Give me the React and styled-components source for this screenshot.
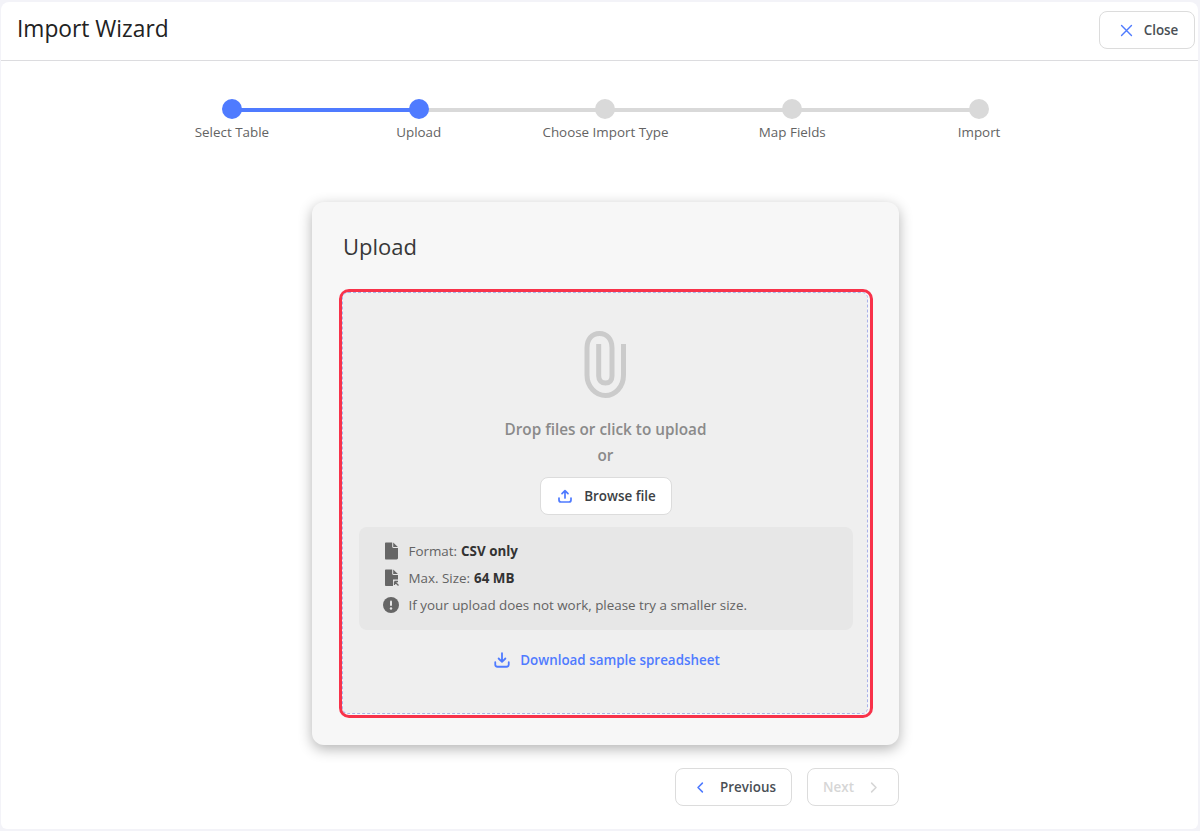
import React from "react";
import styled, { createGlobalStyle } from "styled-components";

const FONT = `"Open Sans", "Noto Sans", "Liberation Sans", sans-serif`;

const Global = createGlobalStyle`
  html, body { margin: 0; padding: 0; background: #f3f3f8; }
  body { font-family: ${FONT}; }
  * { box-sizing: border-box; }
`;

const Window = styled.div`
  width: 1197px; height: 827px; margin: 2px 0 0 1px;
  background: #fff; border-radius: 8px 8px 6px 6px;
  display: flex; flex-direction: column; overflow: hidden;
`;
const Header = styled.header`
  height: 59px; flex: none; padding: 0 3px 2px 16px;
  border-bottom: 1px solid #dcdcdf;
  display: flex; align-items: center; justify-content: space-between;
`;
const Title = styled.h1`
  margin: 0 0 2px; font-size: 22.75px; font-weight: 500; color: #222; line-height: 30px;
`;
const Button = styled.button`
  height: 38px; width: ${p => p.$w}px; padding: 0 ${p => p.$pr || 0}px 0 ${p => p.$pl || 0}px; background: #fff;
  border: 1px solid #dcdcdc; border-radius: 8px;
  font: 600 13.4px ${FONT};
  color: ${p => (p.disabled ? "#d6d6d6" : "#4a4f55")};
  display: inline-flex; align-items: center; justify-content: center; gap: ${p => p.$gap || 12}px;
`;
const Main = styled.main`
  flex: 1; display: flex; flex-direction: column; align-items: center;
  padding: 38px 0 0 11px;
`;
const Stepper = styled.ol`
  list-style: none; margin: 0 0 0 1px; padding: 0; width: 934px;
  display: grid; grid-template-columns: repeat(5, 1fr);
`;
const Step = styled.li`
  position: relative; display: flex; flex-direction: column; align-items: center;
  &::before {
    content: ""; position: absolute; top: 9px; left: -50%; width: 100%; height: 4px;
    background: ${p => (p.$done ? "#4f7bff" : "#d9d9d9")};
    display: ${p => (p.$first ? "none" : "block")};
  }
`;
const Dot = styled.span`
  position: relative; z-index: 1; width: 20px; height: 20px; border-radius: 50%;
  background: ${p => (p.$done ? "#4f7bff" : "#d9d9d9")};
`;
const StepLabel = styled.span`
  margin-top: 3px; font-size: 13.4px; line-height: 20px; color: #636363; white-space: nowrap;
`;
const Card = styled.section`
  margin: 60px 0 0 1px; width: 587px; height: 543px; flex: none;
  background: #f7f7f7; border-radius: 12px; padding: 28px 26px 28px 27px;
  box-shadow: 0 4px 14px rgba(0,0,0,.3);
`;
const CardTitle = styled.h2`
  margin: 0 0 25px 4px; font-size: 22px; font-weight: 400; color: #383838; line-height: 32px;
  padding-bottom: 2px;
`;
const Highlight = styled.div`
  height: 429px; border: 3px solid #f8324a; border-radius: 10px;
`;
const Drop = styled.div`
  width: calc(100% - 2px); height: calc(100% - 1px);
  background: #efefef; background-clip: padding-box;
  border: 1px dashed #aab2ea; border-radius: 6px;
  padding: 38px 15px 0 16px; display: flex; flex-direction: column; align-items: center;
`;
const Clip = styled.svg`
  width: 44px; height: 67px; display: block; flex: none; margin-left: 1px;
`;
const DropText = styled.div`
  margin-top: 18px; font-size: 15.3px; font-weight: 600; line-height: 26px; color: #8a8a8a;
  text-align: center;
`;
const Browse = styled(Button)`
  margin-top: 9px; color: #3c3f44; flex: none;
`;
const Info = styled.ul`
  list-style: none; margin: 12px 0 0; padding: 14px 24px 0; width: 494px; height: 103px;
  background: #e7e7e7; border-radius: 8px; flex: none;
  display: flex; flex-direction: column; gap: 7px;
`;
const InfoRow = styled.li`
  display: flex; align-items: center; gap: 10px; height: 20px;
  font-size: 13.4px; color: #636363; white-space: nowrap;
  b { font-weight: 700; color: #333; margin-left: 4px; }
`;
const InfoIcon = styled.svg`
  width: 16px; height: 18px; flex: none; display: block;
`;
const DownloadLink = styled.a`
  margin: 19px 0 0 2px; display: flex; align-items: center; gap: 9px;
  font-size: 13.4px; font-weight: 600; line-height: 22px; color: #4f7bff; text-decoration: none;
`;
const Footer = styled.nav`
  width: 587px; margin: 23px 0 0 1px; display: flex; justify-content: flex-end; gap: 15px;
`;

const Stroke = ({ children, size = 16, color = "#4f7bff", w = 2 }) => (
  <svg width={size} height={size} viewBox="0 0 24 24" fill="none" stroke={color} strokeWidth={w} strokeLinecap="round" strokeLinejoin="round">
    {children}
  </svg>
);

const steps = ["Select Table", "Upload", "Choose Import Type", "Map Fields", "Import"];

export default function App() {
  return (
    <>
      <Global />
      <Window>
        <Header>
          <Title>Import Wizard</Title>
          <Button $w={96} $gap={9} $pl={2}>
            <Stroke size={17}><path d="M5 5l14 14M19 5L5 19" /></Stroke>
            Close
          </Button>
        </Header>
        <Main>
          <Stepper>
            {steps.map((s, i) => (
              <Step key={s} $first={i === 0} $done={i < 2}>
                <Dot $done={i < 2} />
                <StepLabel>{s}</StepLabel>
              </Step>
            ))}
          </Stepper>
          <Card>
            <CardTitle>Upload</CardTitle>
            <Highlight>
              <Drop>
                <Clip viewBox="0 0 44 67" fill="none" stroke="#cbcbcb" strokeWidth="5">
                  <path d="M39.500 13V44C39.500 56 31 64.500 21.500 64.500C12 64.500 3 56 3 44V17C3 8 8 2.500 15.500 2.500C23 2.500 28 8 28 17V45C28 49.500 25.500 52 21.500 52C17.500 52 14.700 49.500 14.700 45V13" />
                </Clip>
                <DropText>Drop files or click to upload<br />or</DropText>
                <Browse $w={132} $gap={11} $pl={2}>
                  <Stroke size={16} w={2.600}><path d="M12 15V4M7.500 8.500L12 4l4.500 4.500M3 15v3a3 3 0 0 0 3 3h12a3 3 0 0 0 3-3v-3" /></Stroke>
                  Browse file
                </Browse>
                <Info>
                  <InfoRow>
                    <InfoIcon viewBox="0 0 16 18" fill="#666"><path d="M2 1.500C2 .9 2.500 .5 3 .5h6.200v4.300c0 .7.5 1.200 1.200 1.200H15v10c0 .6-.5 1.500-1.500 1.500H3c-.6 0-1-.5-1-1.500zM10.200 .6l4.700 4.500h-4.700z" /></InfoIcon>
                    <span>Format:<b>CSV only</b></span>
                  </InfoRow>
                  <InfoRow>
                    <InfoIcon viewBox="0 0 16 18" fill="#666"><path d="M2 1.500C2 .9 2.500 .5 3 .5h6.200v4.300c0 .7.5 1.200 1.200 1.200H15v4.500H10v6.500H3c-.6 0-1-.5-1-1.500zM10.200 .6l4.700 4.500h-4.700z" /><path d="M11.500 12.500h3.500M11.500 12.500V16M11.500 12.500l4 4" stroke="#666" strokeWidth="1.300" fill="none" /></InfoIcon>
                    <span>Max. Size:<b>64 MB</b></span>
                  </InfoRow>
                  <InfoRow>
                    <InfoIcon viewBox="0 0 16 18"><circle cx="8" cy="9" r="8" fill="#666" /><rect x="7" y="4.500" width="2" height="5.500" rx="1" fill="#e7e7e7" /><circle cx="8" cy="12.500" r="1.200" fill="#e7e7e7" /></InfoIcon>
                    <span>If your upload does not work, please try a smaller size.</span>
                  </InfoRow>
                </Info>
                <DownloadLink href="#">
                  <Stroke size={18} w={2.400}><path d="M12 3v11M7.500 10L12 14.500 16.500 10M3 15v3a3 3 0 0 0 3 3h12a3 3 0 0 0 3-3v-3" /></Stroke>
                  Download sample spreadsheet
                </DownloadLink>
              </Drop>
            </Highlight>
          </Card>
          <Footer>
            <Button $w={117} $pl={2}>
              <Stroke size={15} w={2.500}><path d="M15 5l-7 7 7 7" /></Stroke>
              Previous
            </Button>
            <Button $w={92} $pr={2} disabled>
              Next
              <Stroke size={15} color="#d6d6d6" w={2.500}><path d="M9 5l7 7-7 7" /></Stroke>
            </Button>
          </Footer>
        </Main>
      </Window>
    </>
  );
}
